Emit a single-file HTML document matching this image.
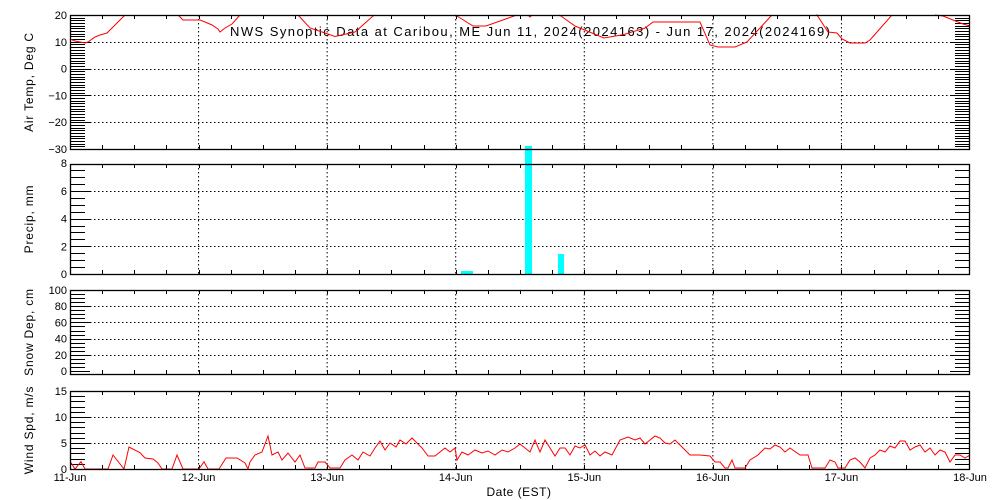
<!DOCTYPE html>
<html><head><meta charset="utf-8"><style>
html,body{margin:0;padding:0;background:#fff;width:1000px;height:500px;overflow:hidden}
svg{display:block}
text{font-family:"Liberation Sans",sans-serif;font-size:11px;fill:#000}
</style></head><body>
<svg id="s" width="1000" height="500" xmlns="http://www.w3.org/2000/svg">
<text x="530" y="36" text-anchor="middle" style="font-size:13px" textLength="600">NWS Synoptic Data at Caribou, ME   Jun 11, 2024(2024163) - Jun 17, 2024(2024169)</text>
</svg>
<script>
var s=document.getElementById('s'),NS='http://www.w3.org/2000/svg';
function el(t,a,txt){var e=document.createElementNS(NS,t);for(var k in a)e.setAttribute(k,a[k]);if(txt!==undefined)e.textContent=txt;s.appendChild(e);return e;}
var L=70,R=970,dayW=900/7;
var panels=[
 {top:15,bot:149,min:-30,max:20,major:10,minor:1,labels:[20,10,0,-10,-20,-30],title:'Air Temp, Deg C'},
 {top:164,bot:274,min:-0.03,max:7.9,major:2,minor:0.5,labels:[8,6,4,2,0],title:'Precip, mm'},
 {top:290,bot:374,min:-4,max:100,major:20,minor:5,labels:[100,80,60,40,20,0],title:'Snow Dep, cm'},
 {top:391,bot:469,min:0,max:15,major:5,minor:1,labels:[15,10,5,0],title:'Wind Spd, m/s'}
];
panels[0].map=function(v){return 15+(20-v)*2.68};
panels[1].map=function(v){return 274-v*13.85};
panels[2].map=function(v){return 371-v*0.81};
panels[3].map=function(v){return 469-v*5.2};
var days=['11-Jun','12-Jun','13-Jun','14-Jun','15-Jun','16-Jun','17-Jun','18-Jun'];
panels.forEach(function(p,i){
 for(var d=1;d<7;d++){var x=L+d*dayW;el('line',{x1:x,x2:x,y1:p.top,y2:p.bot,stroke:'#000','stroke-width':1,'stroke-dasharray':'1.5 2.5'});}
 for(var q=1;q<28;q++){var x=Math.round(L+q*dayW/4)+0.5;el('line',{x1:x,x2:x,y1:p.top,y2:p.top+4,stroke:'#000'});el('line',{x1:x,x2:x,y1:p.bot,y2:p.bot-4,stroke:'#000'});}
 for(var v=Math.ceil(p.min/p.minor)*p.minor;v<=p.max+1e-6;v+=p.minor){
  var y=Math.round(p.map(v))+0.5;if(y<p.top||y>p.bot)continue;
  var maj=Math.abs(v/p.major-Math.round(v/p.major))<1e-6;
  var len=maj?20:15;
  el('line',{x1:L,x2:L+len,y1:y,y2:y,stroke:'#000'});
  el('line',{x1:R-len,x2:R,y1:y,y2:y,stroke:'#000'});
 }
 p.labels.forEach(function(v){var y=p.map(v);
  if(i==0&&v<p.max&&v>p.min || i==1&&v>0&&v<8 || i==2&&v>0&&v<100 || i==3&&v>0&&v<15)
   el('line',{x1:L,x2:R,y1:Math.round(y)+0.5,y2:Math.round(y)+0.5,stroke:'#000','stroke-dasharray':'1.5 2.5'});
  el('text',{x:67,y:y+4,'text-anchor':'end'},(v<0?'\u2212'+(-v):''+v));
 });
 var cy=(p.top+p.bot)/2;
 el('text',{x:0,y:0,'text-anchor':'middle',transform:'translate(33,'+cy+') rotate(-90)',style:'font-size:12px;letter-spacing:0.8px'},p.title);
});
el('rect',{x:461,y:271,width:12,height:3,fill:'#00ffff'});
el('rect',{x:525,y:146,width:7,height:128,fill:'#00ffff'});
el('rect',{x:558,y:254,width:6,height:20,fill:'#00ffff'});
var T=[
 [[70,39],[75,41],[85,43],[88,42],[95,37],[100,35],[107,33],[115,25],[125,15]],
 [[178,15],[183,20],[200,20],[205,22],[212,25],[218,29],[220,32],[225,28],[232,24],[240,15]],
 [[298,15],[310,28],[322,32],[335,36.5],[355,32],[373,16],[375,15]],
 [[455,15],[457,16],[473,26],[486,26],[514,16],[516,15]],
 [[528,15],[530,17],[532,15]],
 [[559,15],[561,16],[575,26],[604,38],[624,34.5],[645,28],[653,22],[669,22],[700,22],[710,45],[718,47],[735,47],[747,42],[771,16],[772,15]],
 [[816,15],[817,15],[828,32],[837,33],[842,39],[850,43],[865,43],[870,40],[877,32],[892,15]],
 [[935,15],[943,16],[963,24],[970,26]]
];
T.forEach(function(seg){el('polyline',{points:seg.map(function(p){return p.join(',')}).join(' '),fill:'none',stroke:'#ff0000','stroke-width':1});});
var W=[[71,462.7],[75,469],[81,461.7],[85,469],[108,469],[113,455],[124,469],[129,447],[140,452.7],[145,458],[153,459],[158,463],[162,469],[172,469],[177,455],[183,469],[199,469],[204,461.7],[208,469],[219,469],[226,458],[237,458],[245,463],[248,469],[250,462],[255,455],[262,452],[268,436],[272,455],[278,452],[282,460],[288,453],[295,462],[300,455],[305,468],[315,468],[318,462],[325,462],[330,468],[340,468],[345,460],[352,455],[358,460],[363,452],[370,456],[375,448],[380,441],[385,450],[390,443],[396,447],[400,440],[406,444],[412,438],[418,444],[422,448],[428,456],[435,456],[440,452],[445,448],[450,452],[455,448],[457,460],[462,452],[468,455],[475,450],[482,453],[488,451],[495,455],[502,450],[508,452],[515,448],[520,444],[525,448],[530,452],[535,440],[540,452],[545,440],[550,448],[555,456],[560,448],[565,448],[570,455],[575,446],[580,448],[585,445],[590,455],[595,451],[600,456],[605,452],[612,455],[620,440],[628,437],[635,440],[640,438],[645,444],[650,440],[655,436],[660,438],[665,443],[670,444],[675,440],[680,445],[690,455],[700,455],[710,456],[715,462],[720,462],[725,468],[728,468],[732,460],[735,468],[745,468],[750,460],[758,455],[765,448],[770,449],[775,445],[780,447],[785,452],[790,448],[800,455],[808,455],[812,468],[825,468],[830,460],[835,462],[838,468],[845,468],[850,460],[855,458],[860,462],[865,468],[870,458],[875,455],[880,450],[885,452],[890,446],[895,448],[900,441],[905,441],[910,450],[915,447],[920,445],[925,452],[930,448],[935,455],[940,450],[945,452],[950,462],[955,455],[960,455],[965,458],[970,455]];
el('polyline',{points:W.map(function(p){return p.join(',')}).join(' '),fill:'none',stroke:'#ff0000','stroke-width':1});
panels.forEach(function(p){el('rect',{x:L+0.5,y:p.top+0.5,width:R-L-1,height:p.bot-p.top,fill:'none',stroke:'#000','stroke-width':1.3});});
days.forEach(function(d,i){el('text',{x:L+i*dayW,y:481,'text-anchor':'middle'},d);});
el('text',{x:519,y:496,'text-anchor':'middle',style:'font-size:12px;letter-spacing:0.5px'},'Date (EST)');
</script>
</body></html>
